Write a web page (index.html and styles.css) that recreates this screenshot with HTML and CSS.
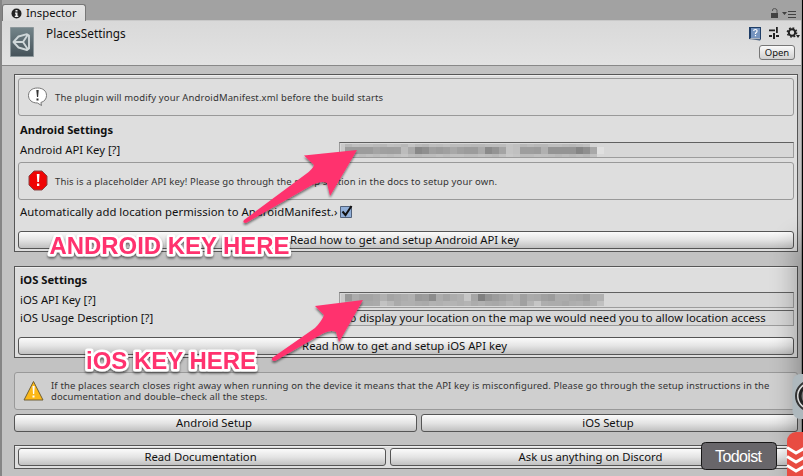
FILE: index.html
```
<!DOCTYPE html>
<html lang="en"><head><meta charset="utf-8"><title>Inspector</title><link rel="stylesheet" href="styles.css"></head>
<body>
<main class="window">
<header class="tabs">
 <div class="tab"><svg width="11" height="11" viewBox="0 0 11 11"><circle cx="5.5" cy="5.5" r="5" fill="#222"/><path d="M4.5 2h2v1.5h-2zM4 4.5h2.5v3.3H7.3V9H3.8V7.8h.8V5.7H4z" fill="#eee"/></svg><span>Inspector</span></div>
 <svg class="tabicons" width="27" height="12" viewBox="0 0 27 12"><path d="M1 5h7v5H1z" fill="#414141"/><path d="M2.500 3V2Q2.500.6 4.500.6T7 2v3" fill="none" stroke="#555"/><path d="M12 4h5l-2.500 3zM18 3h8v1h-8zM18 6h8v1h-8zM18 9h8v1h-8z" fill="#414141"/></svg>
</header>
<section class="head">
 <svg class="unity" width="24" height="30" viewBox="0 0 24 30"><defs><linearGradient id="u" x2="0" y2="1"><stop stop-color="#74858a"/><stop offset="1" stop-color="#455259"/></linearGradient></defs><path d="M.5.5h23v29H.5z" fill="url(#u)" stroke="#8c979b"/><path d="M3.500 15 8.500 9.500 17 7.200 19 8.500v13L17 23l-8.500-2.500zM4 15h9M13 15l5-7.500M13 15l5 7.500" fill="none" stroke="#cfd7d9" stroke-width="1.900" stroke-linejoin="round"/></svg>
 <div class="t-title">PlacesSettings</div>
 <div class="tools"><svg width="52" height="16" viewBox="0 0 52 16"><path d="M1 1h12v12l-1 1.500L1 13z" fill="#1f3e67"/><path d="M3 2h9v10H3z" fill="#7594bf"/><path d="M2 12.300h10v1H3z" fill="#ddd"/><path d="M5.700 5q0-1.500 1.700-1.500T9 5.200Q9 6.200 7.500 7v1M7.500 9v1.300" fill="none" stroke="#fff" stroke-width="1.200"/><path d="M21 3.500h6v1.800h-6zM28 1h1.800v6H28zM21 9h3v2h-3zM25 7h2v6h-2zM28 9h3v2h-3z" fill="#222"/><circle cx="44" cy="6.500" r="3.200" fill="none" stroke="#222" stroke-width="2"/><circle cx="44" cy="6.500" r="4.600" fill="none" stroke="#222" stroke-width="1.500" stroke-dasharray="1.800 1.810"/><path d="M48 9h4l-2 3z" fill="#222"/></svg><div class="open">Open</div></div>
</section>
<div class="content">
<section class="panel android">
 <div class="help"><svg width="22" height="20" viewBox="0 0 22 20"><path d="M10.500 1C5 1 1.500 4 1.500 8.500S5 16 10.500 16l4 2.500-.6-3c3.500-1 5.600-3.500 5.600-7C19.500 4 16 1 10.500 1z" fill="#fff" stroke="#777"/><path d="M9.300 3h2.400l-.6 7H10zM9.500 11.500h2v2h-2z" fill="#333"/></svg><span class="small">The plugin will modify your AndroidManifest.xml before the build starts</span></div>
 <h2>Android Settings</h2>
 <div class="row key"><span class="label">Android API Key [?]</span><div class="input"><svg id="android-key" class="mosaic" width="265" height="14"></svg></div></div>
 <div class="help err"><svg width="22" height="22" viewBox="0 0 22 22"><path d="M7 1h8l5 5v9l-5 5H7l-5-5V6z" fill="#ef0505" stroke="#8a4444"/><path d="M9.800 4h2.700l-.5 8h-1.700zM10 13.500h2.300v2.500H10z" fill="#fff"/></svg><span class="small">This is a placeholder API key! Please go through the setup section in the docs to setup your own.</span></div>
 <div class="row auto"><span class="label">Automatically add location permission to AndroidManifest.›</span><svg width="14" height="14" viewBox="0 0 14 14"><path d="M1.500 1.500h11v11h-11z" fill="#91afd8" stroke="#52627b"/><path d="m3.500 6.500 3 3.500 6-9" fill="none" stroke="#111" stroke-width="2"/></svg></div>
 <div class="btn"><span>Read how to get and setup Android API key</span></div>
</section>
<section class="panel ios">
 <h2>iOS Settings</h2>
 <div class="row key"><span class="label">iOS API Key [?]</span><div class="input"><svg id="ios-key" class="mosaic" width="265" height="14"></svg></div></div>
 <div class="row usage"><span class="label">iOS Usage Description [?]</span><div class="input"><span>To display your location on the map we would need you to allow location access</span></div></div>
 <div class="btn"><span>Read how to get and setup iOS API key</span></div>
</section>
<div class="help warn"><svg width="22" height="22" viewBox="0 0 22 22"><path d="M10.500 1.500 20 20H1z" fill="#fbb817" stroke="#706036" stroke-linejoin="round"/><path d="M9.500 6h2.200l-.5 8h-1.200zM9.500 15.500h2v2h-2z" fill="#fff"/></svg><div class="small">If the places search closes right away when running on the device it means that the API key is misconfigured. Please go through the setup instructions in the<br>documentation and double–check all the steps.</div></div>
<div class="pair"><div class="btn"><span>Android Setup</span></div><div class="btn"><span>iOS Setup</span></div></div>
<section class="panel docs"><div class="btn"><span>Read Documentation</span></div><div class="btn"><span>Ask us anything on Discord</span></div></section>
</div>
</main>
<svg class="overlay" width="803" height="476" viewBox="0 0 803 476">
<defs><filter id="s" x="-10%" y="-20%" width="120%" height="150%"><feDropShadow dx="0" dy="2" stdDeviation="1.300" flood-opacity=".5"/></filter><filter id="soft" x="-300%" y="-50%" width="700%" height="200%"><feGaussianBlur stdDeviation="13"/></filter></defs>
<rect x="795" y="240" width="40" height="260" fill="#000" opacity=".27" filter="url(#soft)"/>
<g fill="#ff326e" filter="url(#s)"><path d="M357 150 304 155.500 314 165Q313 169 306 174L244 220Q242 223 246 223L312 185Q322 180 327 183L330 196z"/><path d="m363 300-48 6 9 9Q322 321 315 328L272 358Q271 361 275 361L322 334Q331 329 336 332L339 342z"/></g>
<g filter="url(#s)" class="callout"><text x="49.500" y="254" textLength="240" lengthAdjust="spacingAndGlyphs">ANDROID KEY HERE</text><text x="86" y="369" textLength="170" lengthAdjust="spacingAndGlyphs">iOS KEY HERE</text></g>
<rect x="792.500" y="374" width="30" height="45" rx="8" fill="#aeb8bd"/><circle cx="811" cy="396" r="15" fill="#ddd" stroke="#333" stroke-width="2"/><circle cx="811" cy="396" r="11" fill="#777" stroke="#222" stroke-width="3"/>
<rect x="787" y="432" width="40" height="60" rx="9" fill="#e84c42"/><path d="m787 447.500 9 5.500 12-7m-21 10.500 9 5.500 12-7m-21 10.500 9 5.500 12-7" fill="none" stroke="#fff" stroke-width="3"/>
<rect x="701.500" y="442.500" width="75" height="27" rx="4" fill="#68666a" stroke="#171717"/><text x="715" y="462" class="todo" textLength="47">Todoist</text>
</svg>
<script src="app.js"></script>
</body></html>
```
FILE: styles.css
```
*{box-sizing:border-box}
body{margin:0;width:803px;height:476px;overflow:hidden;background:#000;font:11.300px/14px "Noto Sans",sans-serif;color:#111}
svg{display:block;flex-shrink:0}
.window{width:802px;height:476px;background:#c2c2c2;border-left:2px solid #858585;border-right:1px solid #999}
.tabs{height:21px;background:#a2a2a2;display:flex;justify-content:space-between;align-items:flex-end;border-bottom:1px solid #c9c9c9}
.tab{width:84px;height:17px;margin-bottom:-1px;background:linear-gradient(#e4e4e4,#dcdcdc);border:1px solid #777;border-bottom:0;border-radius:3px 3px 0 0;display:flex;align-items:center;gap:4px;padding-left:8px}
.tabicons{margin:0 4px 0 0}
.head{height:45px;background:linear-gradient(#d9d9d9,#e2e2e2);border-bottom:1px solid #888;display:flex;padding:6px 6px 0 8px}
.t-title{margin:-1px auto 0 12px;font-size:11.800px}
.tools{display:flex;flex-direction:column;align-items:flex-end;gap:3px;margin:-1px -5px 0 0}
.open{width:36px;height:15px;border:1px solid #777;border-radius:3px;background:linear-gradient(#fafafa,#d0d0d0);font-size:9.500px;line-height:13px;text-align:center;margin-right:5px}
.content{padding:8px 4px 0 12px}
.panel{width:784px;background:#dedede;border:1px solid #565656;padding:3px;box-shadow:inset 0 1px #eee}
.android{height:178px}
.help{height:38px;border:1px solid #999;border-radius:3px;display:flex;align-items:center;gap:6px;padding:0 8px}
.small{font-size:9.500px;line-height:11px;letter-spacing:.14px;color:#333;white-space:nowrap}
h2{margin:7px 0 0 2px;font-size:11.200px;line-height:14px;font-weight:700}
.row{display:flex;align-items:center;padding-left:2px;white-space:nowrap}
.label{width:319px;flex-shrink:0}
.input{width:455px;height:16px;background:#d7d7d7;border:1px solid #9c9c9c;border-top-color:#606060;display:flex;align-items:center;padding-left:4px;overflow:hidden}
.mosaic{margin-left:-3px}
.key{height:16px;margin-top:5px}
.err{margin-top:4px;height:38px}
.auto{height:14px;margin-top:5px}
.auto .label{letter-spacing:.05px}
.btn{height:18px;border:1px solid #555;border-radius:3px;background:linear-gradient(#fbfbfb,#e4e4e4 50%,#c0c0c0);display:flex;align-items:center;justify-content:center;white-space:nowrap}
.btn span{margin-right:3px}
.android .btn{margin-top:12px}
.ios{height:92px;margin-top:14px}
.ios h2{margin-top:3px}
.usage{height:16px;margin-top:2px}
.ios .btn{margin-top:11px}
.warn{width:784px;height:38px;margin-top:14px;background:#cfcfcf}
.pair{width:784px;display:grid;grid-template-columns:403px 377px;gap:4px;margin-top:4px}
.docs{height:24px;margin-top:13px;display:grid;grid-template-columns:368px 1fr;gap:4px;padding:2px 3px}
.overlay{position:absolute;inset:0}
.callout{font:bold 23.500px "Liberation Sans",sans-serif;fill:#ff326e;stroke:#fff;stroke-width:5px;paint-order:stroke;stroke-linejoin:round}
.todo{font:16px "Liberation Sans",sans-serif;fill:#fff}
```
FILE: app.js
```
// Censored key values: rows of 7px wide grey cells, one hex byte per cell.
const masks = {
  "android-key": [
    [1, 3, "b8c0bebebab8c0beb8c4bab6bebcc0bcbcbab8b8bcbcbcc4c0b8bcb8b8bebebab8bcc0d4"],
    [4, 7, "9c9c9c9ca4a09fa0bcaa888fa09ca0a8a09c9caa8a94a4c4c09e9e9cb094949494858fa8e0"],
    [11, 3, "c4c0bcc0bcc0bcc0c4bcb8bcbcc0bcc0c0bcbcc0bcb8c0c8c4bcbcc0bebcb8bcb8bcb8c0d8"]
  ],
  "ios-key": [
    [1, 7, "98aca4a4a8b0a4a8acb0999c8caca4acb0c6a680949ca2a8b0a0aaa8a09cacaca8a6a0b0b0"],
    [8, 5, "a8aca8a8aac2b8aab0b0acaab2b0b4b4b0b4acb0aaa8acb4b0a0b4c6aeacaca8aeb0aab0c0"]
  ]
};
const ns = "http://www.w3.org/2000/svg";
function rect(svg, x, y, w, h, fill) {
  const r = document.createElementNS(ns, "rect");
  for (const [k, v] of Object.entries({ x, y, width: w, height: h, fill })) r.setAttribute(k, v);
  svg.append(r);
}
for (const [id, rows] of Object.entries(masks)) {
  const svg = document.getElementById(id);
  rect(svg, 0, 1, 4, 12, "#c9c9c9");
  for (const [y, h, row] of rows) {
    row.match(/../g).forEach((c, i) => rect(svg, 4 + i * 7, y, 7, h, "#" + c.repeat(3)));
  }
}
```
